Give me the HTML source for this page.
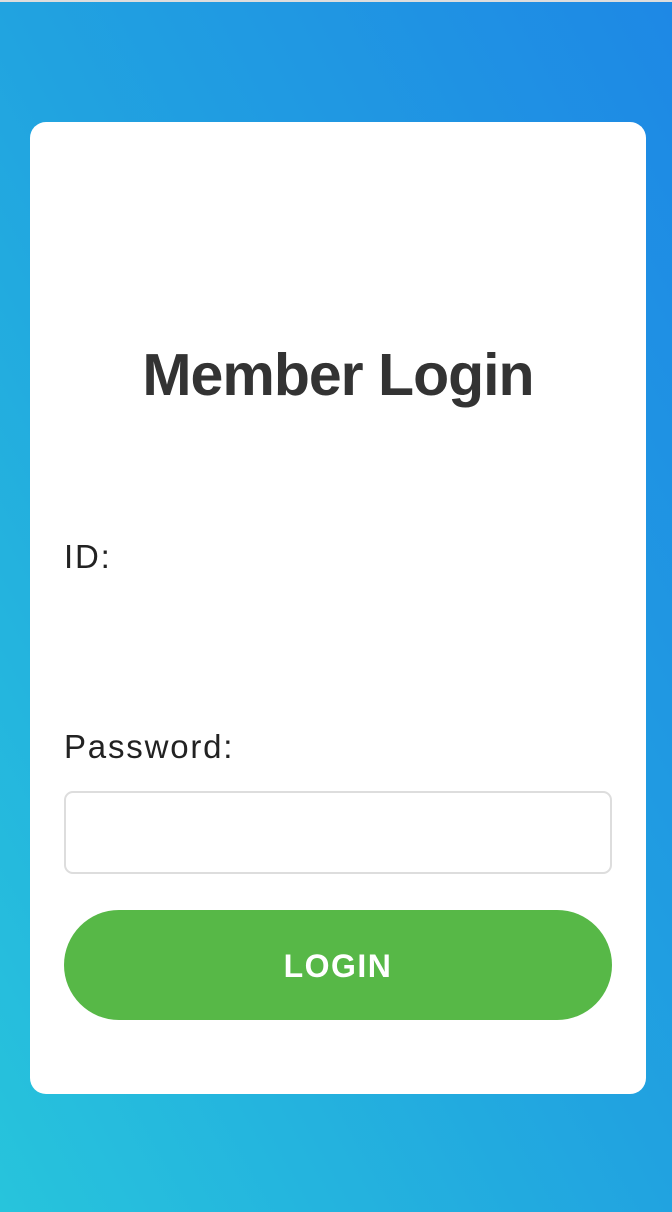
<!DOCTYPE html>
<html><head><style>
html,body{margin:0;padding:0}
body{width:672px;height:1212px;position:relative;overflow:hidden;font-family:"Liberation Sans",sans-serif;
background:linear-gradient(to top right,#27c4dc 0%,#21a3e0 50%,#1e88e5 100%);}
.top{position:absolute;left:0;top:0;width:672px;height:2px;background:#ddd}
.card{position:absolute;left:30px;top:122px;width:616px;height:972px;background:#fff;border-radius:16px}
.lbl{position:absolute;left:34px;font-size:33px;color:#222;line-height:1;letter-spacing:1.8px}
.inp{position:absolute;left:34px;top:669px;border:2px solid #ddd;border-radius:9px;box-sizing:border-box;width:548px;height:83px}
.btn{position:absolute;left:34px;top:788px;width:548px;height:110px;border-radius:55px;background:#57b847;color:#fff;font-weight:bold;font-size:32px;text-align:center;line-height:112px;letter-spacing:1.5px}
</style></head><body>
<div class="top"></div>
<div class="card">
<div style="position:absolute;left:0;top:224px;width:616px;text-align:center;font-size:59px;font-weight:bold;color:#333;letter-spacing:-1px;line-height:1">Member Login</div>
<div class="lbl" style="top:418px">ID:</div>
<div class="lbl" style="top:608px">Password:</div>
<div class="inp"></div>
<div class="btn">LOGIN</div>
</div>
</body></html>
